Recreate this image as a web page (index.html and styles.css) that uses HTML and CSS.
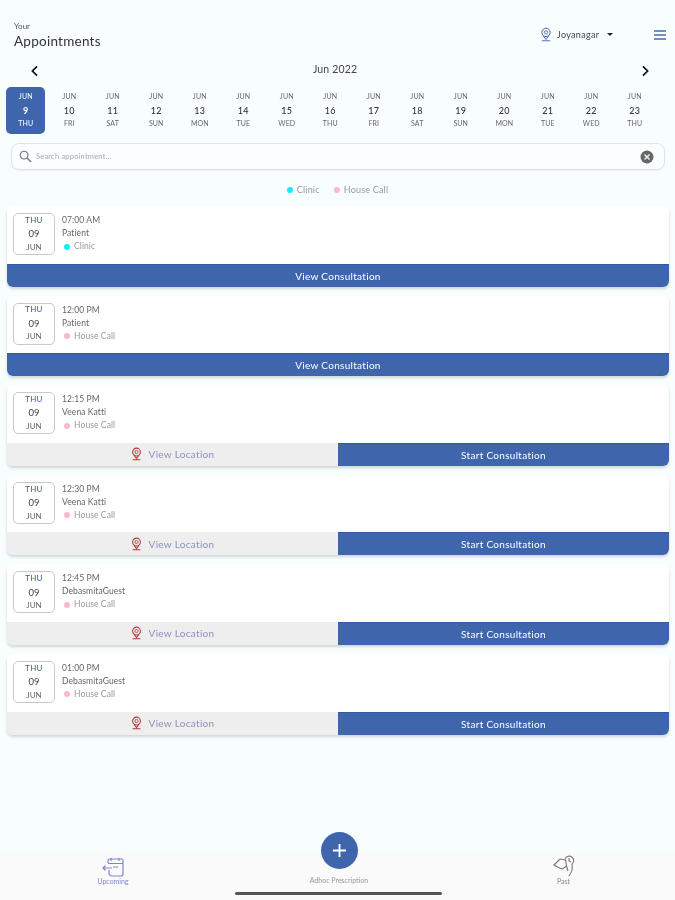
FILE: index.html
```html
<!DOCTYPE html>
<html lang="en">
<head>
<meta charset="utf-8">
<title>Appointments</title>
<link rel="stylesheet" href="styles.css">
</head>
<body>
<div class="page">
  <header class="top">
    <div class="title">
      <div class="title-small">Your</div>
      <div class="title-main">Appointments</div>
    </div>
    <div class="top-right">
      <svg class="pin-top" viewBox="0 0 14 18" width="12" height="15"><circle cx="7" cy="6.5" r="5" fill="none" stroke="#4a62a8" stroke-width="1.2"/><circle cx="7" cy="6.5" r="2" fill="none" stroke="#4a62a8" stroke-width="1"/><path d="M4 11l3 4 3-4M2 16.5h10" fill="none" stroke="#4a62a8" stroke-width="1.1"/></svg>
      <span class="place">Joyanagar</span>
      <span class="caret"></span>
      <svg class="menu" viewBox="0 0 12 10" width="12" height="10"><path d="M0 1h12M0 5h12M0 9h12" stroke="#4a68ae" stroke-width="1.3"/></svg>
    </div>
  </header>

  <div class="month">
    <svg viewBox="0 0 10 14" width="9" height="12"><path d="M8 1.5L2.5 7 8 12.500" fill="none" stroke="#111" stroke-width="2"/></svg>
    <span class="month-name">Jun 2022</span>
    <svg viewBox="0 0 10 14" width="9" height="12"><path d="M2 1.500L7.500 7 2 12.500" fill="none" stroke="#111" stroke-width="2"/></svg>
  </div>

  <div class="dates">
    <div class="date selected"><span>JUN</span><b>9</b><span>THU</span></div>
    <div class="date"><span>JUN</span><b>10</b><span>FRI</span></div>
    <div class="date"><span>JUN</span><b>11</b><span>SAT</span></div>
    <div class="date"><span>JUN</span><b>12</b><span>SUN</span></div>
    <div class="date"><span>JUN</span><b>13</b><span>MON</span></div>
    <div class="date"><span>JUN</span><b>14</b><span>TUE</span></div>
    <div class="date"><span>JUN</span><b>15</b><span>WED</span></div>
    <div class="date"><span>JUN</span><b>16</b><span>THU</span></div>
    <div class="date"><span>JUN</span><b>17</b><span>FRI</span></div>
    <div class="date"><span>JUN</span><b>18</b><span>SAT</span></div>
    <div class="date"><span>JUN</span><b>19</b><span>SUN</span></div>
    <div class="date"><span>JUN</span><b>20</b><span>MON</span></div>
    <div class="date"><span>JUN</span><b>21</b><span>TUE</span></div>
    <div class="date"><span>JUN</span><b>22</b><span>WED</span></div>
    <div class="date"><span>JUN</span><b>23</b><span>THU</span></div>
  </div>

  <div class="search">
    <svg viewBox="0 0 14 14" width="13" height="13"><circle cx="5.500" cy="5.500" r="4.200" fill="none" stroke="#777" stroke-width="1.200"/><path d="M8.700 8.700L13 13" stroke="#777" stroke-width="1.500"/></svg>
    <span class="search-text">Search appointment...</span>
    <svg class="clear" viewBox="0 0 14 14" width="14" height="14"><circle cx="7" cy="7" r="6.500" fill="#666"/><path d="M4.500 4.500l5 5M9.500 4.500l-5 5" stroke="#eee" stroke-width="1.500"/></svg>
  </div>

  <div class="legend">
    <span class="dot cyan"></span><span class="legend-label">Clinic</span>
    <span class="dot pink legend-second"></span><span class="legend-label">House Call</span>
  </div>

  <main class="cards">
    <article class="card">
      <div class="info">
        <div class="cal"><span class="cal-day">THU</span><span class="cal-num">09</span><span class="cal-mon">JUN</span></div>
        <div class="meta"><div>07:00 AM</div><div>Patient</div><div class="kind"><span class="dot cyan"></span><span class="kind-label">Clinic</span></div></div>
      </div>
      <div class="actions"><div class="btn-primary">View Consultation</div></div>
    </article>
    <article class="card">
      <div class="info">
        <div class="cal"><span class="cal-day">THU</span><span class="cal-num">09</span><span class="cal-mon">JUN</span></div>
        <div class="meta"><div>12:00 PM</div><div>Patient</div><div class="kind"><span class="dot pink"></span><span class="kind-label">House Call</span></div></div>
      </div>
      <div class="actions"><div class="btn-primary">View Consultation</div></div>
    </article>
    <article class="card">
      <div class="info">
        <div class="cal"><span class="cal-day">THU</span><span class="cal-num">09</span><span class="cal-mon">JUN</span></div>
        <div class="meta"><div>12:15 PM</div><div>Veena Katti</div><div class="kind"><span class="dot pink"></span><span class="kind-label">House Call</span></div></div>
      </div>
      <div class="actions">
        <div class="btn-loc"><svg viewBox="0 0 14 18" width="11" height="14"><circle cx="7" cy="6.500" r="5" fill="none" stroke="#b5393c" stroke-width="1.400"/><circle cx="7" cy="6.500" r="2" fill="none" stroke="#b5393c" stroke-width="1.100"/><path d="M4 11l3 4 3-4M2 16.500h10" fill="none" stroke="#b5393c" stroke-width="1.300"/></svg><span>View Location</span></div>
        <div class="btn-primary">Start Consultation</div>
      </div>
    </article>
    <article class="card">
      <div class="info">
        <div class="cal"><span class="cal-day">THU</span><span class="cal-num">09</span><span class="cal-mon">JUN</span></div>
        <div class="meta"><div>12:30 PM</div><div>Veena Katti</div><div class="kind"><span class="dot pink"></span><span class="kind-label">House Call</span></div></div>
      </div>
      <div class="actions">
        <div class="btn-loc"><svg viewBox="0 0 14 18" width="11" height="14"><circle cx="7" cy="6.500" r="5" fill="none" stroke="#b5393c" stroke-width="1.400"/><circle cx="7" cy="6.500" r="2" fill="none" stroke="#b5393c" stroke-width="1.100"/><path d="M4 11l3 4 3-4M2 16.500h10" fill="none" stroke="#b5393c" stroke-width="1.300"/></svg><span>View Location</span></div>
        <div class="btn-primary">Start Consultation</div>
      </div>
    </article>
    <article class="card">
      <div class="info">
        <div class="cal"><span class="cal-day">THU</span><span class="cal-num">09</span><span class="cal-mon">JUN</span></div>
        <div class="meta"><div>12:45 PM</div><div>DebasmitaGuest</div><div class="kind"><span class="dot pink"></span><span class="kind-label">House Call</span></div></div>
      </div>
      <div class="actions">
        <div class="btn-loc"><svg viewBox="0 0 14 18" width="11" height="14"><circle cx="7" cy="6.500" r="5" fill="none" stroke="#b5393c" stroke-width="1.400"/><circle cx="7" cy="6.500" r="2" fill="none" stroke="#b5393c" stroke-width="1.100"/><path d="M4 11l3 4 3-4M2 16.500h10" fill="none" stroke="#b5393c" stroke-width="1.300"/></svg><span>View Location</span></div>
        <div class="btn-primary">Start Consultation</div>
      </div>
    </article>
    <article class="card">
      <div class="info">
        <div class="cal"><span class="cal-day">THU</span><span class="cal-num">09</span><span class="cal-mon">JUN</span></div>
        <div class="meta"><div>01:00 PM</div><div>DebasmitaGuest</div><div class="kind"><span class="dot pink"></span><span class="kind-label">House Call</span></div></div>
      </div>
      <div class="actions">
        <div class="btn-loc"><svg viewBox="0 0 14 18" width="11" height="14"><circle cx="7" cy="6.500" r="5" fill="none" stroke="#b5393c" stroke-width="1.400"/><circle cx="7" cy="6.500" r="2" fill="none" stroke="#b5393c" stroke-width="1.100"/><path d="M4 11l3 4 3-4M2 16.500h10" fill="none" stroke="#b5393c" stroke-width="1.300"/></svg><span>View Location</span></div>
        <div class="btn-primary">Start Consultation</div>
      </div>
    </article>
  </main>

  <nav class="tabs">
    <div class="tab tab-active">
      <svg viewBox="0 0 22 20" width="22" height="20"><path d="M6 6V3.500a1.500 1.500 0 0 1 1.500-1.500h12A1.500 1.500 0 0 1 21 3.500V17a2 2 0 0 1-2 2H10a3 3 0 0 1-3-3v-3M6 6.500h15M9 1v3M17 1v3M1 11h9M3.500 8.500L1 11l2.500 2.500M11 10h5" fill="none" stroke="#8286c8" stroke-width="1.200"/></svg>
      <span>Upcoming</span>
    </div>
    <div class="tab tab-mid">
      <span>Adhoc Prescription</span>
    </div>
    <div class="tab tab-past">
      <svg viewBox="0 0 22 22" width="22" height="22"><path d="M1 10l6-6 5.500 1 1 6-4 3-3-1zM12 4a4.500 4.500 0 1 1 6.500 5.500M16 3v3l2 1M19 9.500c1 4-.5 8-3 11.500M13.500 11l1.500 5" fill="none" stroke="#777" stroke-width="1.100"/></svg>
      <span>Past</span>
    </div>
    <button class="fab" type="button" aria-label="Add">
      <svg viewBox="0 0 16 16" width="15" height="15"><path d="M8 1v14M1 8h14" stroke="#fff" stroke-width="2"/></svg>
    </button>
    <div class="home-bar"></div>
  </nav>
</div>
</body>
</html>
```

FILE: styles.css
```css
* { box-sizing: border-box; }
html, body { margin: 0; padding: 0; }
body {
  width: 675px;
  height: 900px;
  overflow: hidden;
  background: #f8fefe;
  font-family: "Lato", "Liberation Sans", sans-serif;
  color: #555;
}
.page {
  height: 900px;
  display: flex;
  flex-direction: column;
  filter: blur(0.45px);
}
.top {
  display: flex;
  justify-content: space-between;
  align-items: flex-start;
  padding: 21px 9px 0 14px;
  height: 58px;
}
.title-small { font-size: 8px; line-height: 10px; color: #555; }
.title-main { font-size: 13.500px; line-height: 20px; color: #333; letter-spacing: 0.25px; }
.top-right { display: flex; align-items: center; margin-top: 6px; }
.pin-top { margin-right: 5px; }
.place { font-size: 9px; color: #444; letter-spacing: 0.3px; width: 45px; }
.caret {
  width: 0; height: 0;
  border-left: 3px solid transparent;
  border-right: 3px solid transparent;
  border-top: 3px solid #222;
  margin-left: 5px;
  margin-right: 41px;
}
.month {
  display: flex;
  justify-content: space-between;
  align-items: center;
  height: 26px;
  padding: 0 25px 0 30px;
}
.month-name { font-size: 10.500px; color: #444; letter-spacing: 0.15px; margin: -5px 10px 0 0; }
.dates {
  display: flex;
  padding-left: 4px;
  height: 47px;
  margin-top: 3px;
  overflow: hidden;
}
.date {
  flex: 0 0 43.500px;
  display: flex;
  flex-direction: column;
  align-items: center;
  justify-content: center;
  font-size: 7px;
  color: #666;
}
.date span { line-height: 13.500px; letter-spacing: 0.1px; }
.date b { font-size: 9px; line-height: 13.500px; font-weight: 500; color: #333; letter-spacing: 0.4px; }
.date.selected {
  flex: 0 0 39px;
  margin: 0 2.250px;
  background: #3f66ad;
  color: #fff;
  border-radius: 5px;
}
.date.selected b { color: #fff; font-weight: 700; }
.search {
  display: flex;
  align-items: center;
  height: 27px;
  margin: 9px 10px 0 11px;
  padding: 0 10px 0 7px;
  border: 1px solid #dfe3e3;
  border-radius: 8px;
  box-shadow: 0 1px 1px rgba(0,0,0,0.05);
  background: #fafefe;
}
.search-text { font-size: 7.500px; color: #aaa; margin-left: 4px; flex: 1; letter-spacing: 0.2px; }
.legend {
  display: flex;
  justify-content: center;
  align-items: center;
  height: 13px;
  margin-top: 13px;
}
.legend-label { font-size: 9px; color: #999; letter-spacing: 0.2px; }
.legend .dot { margin-right: 4px; }
.legend-second { margin-left: 14px; }
.dot { display: inline-block; width: 6px; height: 6px; border-radius: 50%; }
.cyan { background: #0cf0fb; }
.pink { background: #fbb9ca; }
.cards {
  display: flex;
  flex-direction: column;
  gap: 9px;
  padding: 10px 6px 0 7px;
}
.card {
  height: 80.600px;
  background: #fff;
  border-radius: 6px;
  box-shadow: 0 2px 3px rgba(0,0,0,0.16);
  display: flex;
  flex-direction: column;
  overflow: hidden;
}
.info {
  flex: 1;
  display: flex;
  align-items: flex-start;
  padding: 7px 0 0 6px;
}
.cal {
  width: 42px;
  height: 42px;
  border: 1px solid #c9c9c9;
  border-radius: 5px;
  display: flex;
  flex-direction: column;
  align-items: center;
  justify-content: center;
  background: #fff;
}
.cal-day { font-size: 8px; line-height: 13.500px; color: #3f55a5; letter-spacing: 0.2px; }
.cal-num { font-size: 9.500px; line-height: 13.500px; color: #444; }
.cal-mon { font-size: 8px; line-height: 13.500px; color: #666; }
.meta {
  margin: 1px 0 0 7px;
  font-size: 8.500px;
  line-height: 13px;
  color: #666;
  letter-spacing: 0.1px;
}
.kind { display: flex; align-items: center; padding-left: 2px; }
.kind .dot { margin-right: 4px; }
.kind-label { color: #999; }
.actions { display: flex; height: 23px; }
.btn-primary {
  flex: 1;
  display: flex;
  align-items: center;
  justify-content: center;
  background: #3f66ad;
  border-top: 1px solid #2f5aa8;
  color: #fff;
  font-size: 10px;
  letter-spacing: 0.3px;
}
.btn-loc {
  flex: 0 0 331px;
  display: flex;
  align-items: center;
  justify-content: center;
  gap: 7px;
  background: #eeeeee;
  color: #8b90c0;
  font-size: 10px;
  letter-spacing: 0.3px;
}
.tabs {
  position: relative;
  margin-top: auto;
  height: 48px;
  background: #fafafa;
  display: grid;
  grid-template-columns: 226px 226px 1fr;
}
.tab {
  display: flex;
  flex-direction: column;
  align-items: center;
  font-size: 7px;
  color: #888;
  padding-top: 5px;
}
.tab span { line-height: 9px; }
.tab-active { color: #7f83c6; }
.tab-mid { padding-top: 24px; color: #999; }
.tab-past { padding-top: 3px; }
.fab {
  position: absolute;
  left: 321px;
  top: -20px;
  width: 37px;
  height: 37px;
  border: 0;
  padding: 0;
  border-radius: 50%;
  background: #3f66ad;
  display: flex;
  align-items: center;
  justify-content: center;
}
.home-bar {
  position: absolute;
  left: 235px;
  top: 40px;
  width: 207px;
  height: 3px;
  border-radius: 2px;
  background: #555;
}
```
